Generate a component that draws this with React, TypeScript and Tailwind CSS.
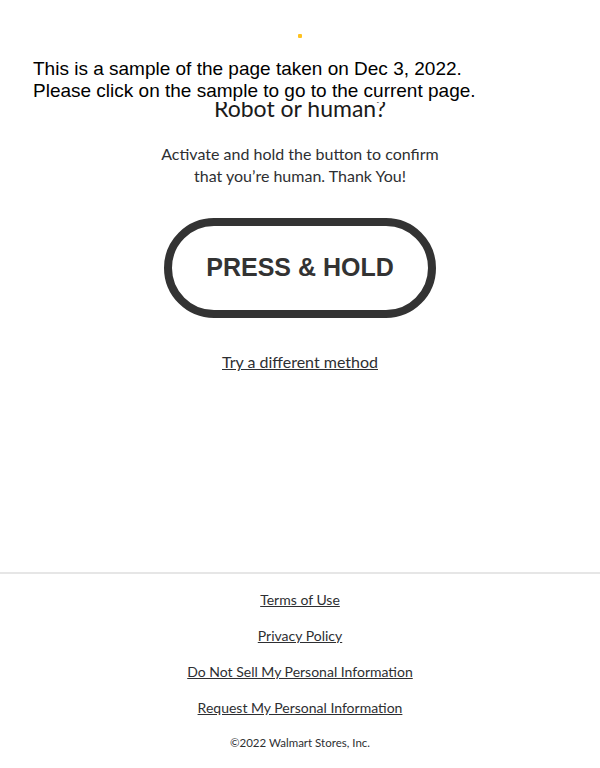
import React from "react";

export default function App() {
  return (
    <div className="relative min-h-[768px] h-[768px] bg-white flex flex-col text-[#2e2f32] [font-family:Lato,'Noto_Sans',sans-serif]">
      <div className="absolute left-[33px] top-[58px] bg-white text-black text-[19px] leading-[22px] [font-family:'Liberation_Sans',Arial,sans-serif] pr-[2px] z-10">
        <div>This is a sample of the page taken on Dec 3, 2022.</div>
        <div>Please click on the sample to go to the current page.</div>
      </div>
      <main className="flex flex-col items-center pt-[34px]">
        <div className="w-[4px] h-[4px] bg-[#ffc220] rounded-[1px]" />
        <h1 className="mt-[56px] text-[23px] leading-[28px] text-[#1a1a1a] font-normal">Robot or human?</h1>
        <p className="mt-[21px] text-center text-[16px] leading-[22px] text-[#2e2f32]">
          Activate and hold the button to confirm
          <br />
          that you’re human. Thank You!
        </p>
        <button className="mt-[31px] w-[272px] h-[100px] rounded-full border-[8px] border-[#333333] bg-white flex items-center justify-center">
          <span className="text-[25px] font-bold text-[#333333] [font-family:'Liberation_Sans',Arial,sans-serif]">PRESS &amp; HOLD</span>
        </button>
        <a className="mt-[33px] text-[16px] leading-[22px] underline text-[#2e2f32]">Try a different method</a>
      </main>
      <footer className="mt-auto border-t-2 border-[#e6e6e6] flex flex-col items-center pt-[16px] pb-[17px]">
        <a className="text-[14px] leading-[20px] underline">Terms of Use</a>
        <a className="mt-[16px] text-[14px] leading-[20px] underline">Privacy Policy</a>
        <a className="mt-[16px] text-[14px] leading-[20px] underline">Do Not Sell My Personal Information</a>
        <a className="mt-[16px] text-[14px] leading-[20px] underline">Request My Personal Information</a>
        <div className="mt-[17px] text-[11.5px] leading-[16px]">©2022 Walmart Stores, Inc.</div>
      </footer>
    </div>
  );
}
